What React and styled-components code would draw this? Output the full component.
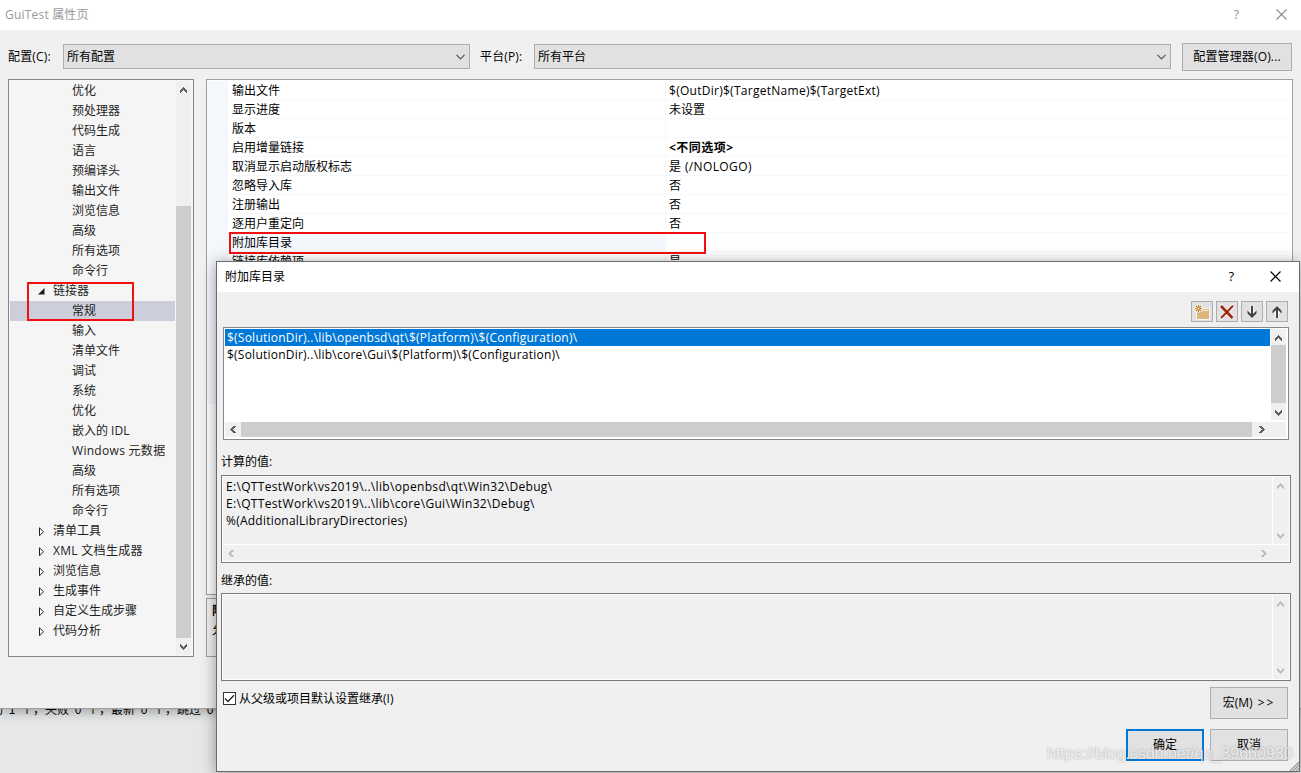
import React, { useState } from 'react';
import styled, { createGlobalStyle, css } from 'styled-components';

const treeItems = [
  { label: '优化' },
  { label: '预处理器' },
  { label: '代码生成' },
  { label: '语言' },
  { label: '预编译头' },
  { label: '输出文件' },
  { label: '浏览信息' },
  { label: '高级' },
  { label: '所有选项' },
  { label: '命令行' },
  { label: '链接器', parent: true, open: true },
  { label: '常规' },
  { label: '输入' },
  { label: '清单文件' },
  { label: '调试' },
  { label: '系统' },
  { label: '优化' },
  { label: '嵌入的 IDL' },
  { label: 'Windows 元数据', latin: true },
  { label: '高级' },
  { label: '所有选项' },
  { label: '命令行' },
  { label: '清单工具', parent: true },
  { label: 'XML 文档生成器', parent: true, latin: true },
  { label: '浏览信息', parent: true },
  { label: '生成事件', parent: true },
  { label: '自定义生成步骤', parent: true },
  { label: '代码分析', parent: true },
];

const properties = [
  { name: '输出文件', value: '$(OutDir)$(TargetName)$(TargetExt)', spacing: '0.27px' },
  { name: '显示进度', value: '未设置' },
  { name: '版本', value: '' },
  { name: '启用增量链接', value: '<不同选项>', bold: true, spacing: '0.5px' },
  { name: '取消显示启动版权标志', value: '是 (/NOLOGO)', spacing: '0.38px' },
  { name: '忽略导入库', value: '否' },
  { name: '注册输出', value: '否' },
  { name: '逐用户重定向', value: '否' },
  { name: '附加库目录', value: '', active: true },
  { name: '链接库依赖项', value: '是' },
];

const directories = [
  '$(SolutionDir)..\\lib\\openbsd\\qt\\$(Platform)\\$(Configuration)\\',
  '$(SolutionDir)..\\lib\\core\\Gui\\$(Platform)\\$(Configuration)\\',
];

const evaluated = [
  'E:\\QTTestWork\\vs2019\\..\\lib\\openbsd\\qt\\Win32\\Debug\\',
  'E:\\QTTestWork\\vs2019\\..\\lib\\core\\Gui\\Win32\\Debug\\',
  '%(AdditionalLibraryDirectories)',
];

function Arrow({ dir = 'up', color = '#606060' }) {
  const angle = { up: 0, right: 90, down: 180, left: 270 }[dir];
  return (
    <svg width="7" height="7" viewBox="0 0 7 7" shapeRendering="crispEdges">
      <path
        transform={`rotate(${angle} 3.5 3.5)`}
        fill={color}
        d="M3 0h1v1h1v1h1v1h1v3h-1v-1h-1v-1h-1v-1h-1v1h-1v1h-1v1h-1v-3h1v-1h1v-1h1z"
      />
    </svg>
  );
}

function CloseIcon({ color }) {
  return (
    <svg width="11" height="11" viewBox="0 0 11 11">
      <path d="M.5 .5l10 10M10.5 .5l-10 10" stroke={color} strokeWidth="1.1" fill="none" />
    </svg>
  );
}

function ComboArrow() {
  return (
    <svg width="9" height="6" viewBox="0 0 9 6">
      <path d="M.5 .8l4 4 4-4" stroke="#555" strokeWidth="1.2" fill="none" />
    </svg>
  );
}

function Expander({ open }) {
  return (
    <svg width="8" height="9" viewBox="0 0 8 9">
      {open ? (
        <path d="M6.500 1v6.500H0z" fill="#1e1e1e" />
      ) : (
        <path d="M1.5 .8v7.900l4-3.950z" fill="#fff" stroke="#1e1e1e" />
      )}
    </svg>
  );
}

function NewFolderIcon() {
  return (
    <svg width="16" height="16" viewBox="0 0 16 16">
      <path d="M2 7h6l1.500-3H16v12H2z" fill="#f6f6f6" />
      <path d="M3 7h5.500l1-2H15v10H3z" fill="#dcb67a" />
      <path d="M9.500 6.500h4.500" stroke="#f6f0e4" />
      <circle cx="4.500" cy="4.500" r="4" fill="#f6f6f6" />
      <path
        d="M4.500 1v2.200M4.500 5.800V8M1 4.500h2.200M5.800 4.500H8M2 2l1.700 1.700M5.300 5.300L7 7M7 2L5.300 3.700M3.700 5.300L2 7"
        stroke="#c27d1a"
        strokeWidth="1.200"
      />
      <circle cx="4.500" cy="4.500" r="1.400" fill="none" stroke="#c27d1a" strokeWidth=".8" />
    </svg>
  );
}

function DeleteIcon() {
  return (
    <svg width="16" height="16" viewBox="0 0 16 16">
      <path d="M1.500 1.500l12 12.500M14.500 1.500L1.500 14.500" stroke="#f6f6f6" strokeWidth="4" />
      <path d="M2 2l11.500 12" stroke="#a1260d" strokeWidth="2.600" />
      <path d="M14 1.800L2 14" stroke="#a1260d" strokeWidth="2" />
    </svg>
  );
}

function MoveIcon({ up }) {
  return (
    <svg width="16" height="16" viewBox="0 0 16 16">
      <g transform={up ? 'rotate(180 8 8)' : undefined}>
        <path d="M8 2v11M4 8l4 4 4-4" stroke="#f6f6f6" strokeWidth="4" fill="none" />
        <path d="M8 2v10" stroke="#424242" strokeWidth="2" />
        <path d="M3.500 6.500v3L8 14l4.500-4.500v-3L8 11z" fill="#424242" />
      </g>
    </svg>
  );
}

function ScrollBar({ horizontal, disabled, thumb, width, lead, atStart }) {
  const color = disabled ? '#bfbfbf' : '#606060';
  return (
    <Track $horizontal={horizontal} $width={width}>
      <TrackEnd $horizontal={horizontal} $size={lead} $first>
        <Arrow dir={horizontal ? 'left' : 'up'} color={color} />
      </TrackEnd>
      <TrackBody $horizontal={horizontal} $align={atStart ? 'flex-start' : 'flex-end'}>
        {thumb && <Thumb $horizontal={horizontal} $length={thumb} />}
      </TrackBody>
      <TrackEnd $horizontal={horizontal} $size={lead}>
        <Arrow dir={horizontal ? 'right' : 'down'} color={color} />
      </TrackEnd>
    </Track>
  );
}

function DirectoryDialog() {
  const [inherit, setInherit] = useState(true);
  const [selected, setSelected] = useState(0);

  return (
    <Dialog>
      <DialogTitle>
        <span>附加库目录</span>
        <TitleButtons $gap="36px" $right="18px">
          <Help>?</Help>
          <CloseIcon color="#000" />
        </TitleButtons>
      </DialogTitle>
      <ToolRow>
        <ToolButton><NewFolderIcon /></ToolButton>
        <ToolButton><DeleteIcon /></ToolButton>
        <ToolButton><MoveIcon /></ToolButton>
        <ToolButton><MoveIcon up /></ToolButton>
      </ToolRow>
      <ListBox>
        <ListTop>
          <List>
            {directories.map((dir, i) => (
              <ListRow key={dir} $selected={i === selected} onClick={() => setSelected(i)}>
                {dir}
              </ListRow>
            ))}
          </List>
          <ScrollBar width="15px" lead="16px" thumb="58px" atStart />
        </ListTop>
        <ListBottom>
          <ScrollBar horizontal width="15px" lead="16px" thumb="1011px" atStart />
        </ListBottom>
      </ListBox>

      <FieldLabel $top="13px" $bottom="5px">计算的值:</FieldLabel>
      <ReadBox>
        <ReadTop>
          <ReadText>
            {evaluated.map((line, i) => (
              <ReadLine key={line} $spacing={i === 2 ? '0.23px' : '0.33px'}>{line}</ReadLine>
            ))}
          </ReadText>
          <ScrollBar disabled width="16px" lead="17px" />
        </ReadTop>
        <ReadBottom>
          <ScrollBar horizontal disabled width="16px" lead="17px" />
        </ReadBottom>
      </ReadBox>

      <FieldLabel $top="9px" $bottom="4px">继承的值:</FieldLabel>
      <ReadBox>
        <ReadTop>
          <ReadText />
          <ScrollBar disabled width="16px" lead="17px" />
        </ReadTop>
      </ReadBox>

      <MacroRow>
        <CheckLabel onClick={() => setInherit(!inherit)}>
          <CheckBox>
            {inherit && (
              <svg width="11" height="11" viewBox="0 0 11 11">
                <path d="M1 5.500l3 3L10 2.200" stroke="#222" strokeWidth="1.300" fill="none" />
              </svg>
            )}
          </CheckBox>
          从父级或项目默认设置继承(I)
        </CheckLabel>
        <Button>
          宏(M) <More>&gt;&gt;</More>
        </Button>
      </MacroRow>
      <ButtonRow>
        <Button $primary>确定</Button>
        <Button>取消</Button>
      </ButtonRow>
      <Grip width="9" height="9" viewBox="0 0 9 9">
        <path d="M0 9L9 0M3 9L9 3M6 9L9 6" stroke="#9a9a9a" strokeWidth="1.300" />
      </Grip>
    </Dialog>
  );
}

export default function App() {
  const [active, setActive] = useState(11);

  return (
    <Screen>
      <GlobalStyle />
      <MainWindow>
        <MainTitle>
          <TitleText>GuiTest 属性页</TitleText>
          <TitleButtons $gap="37px" $right="14px">
            <Help>?</Help>
            <CloseIcon color="#8c8c8c" />
          </TitleButtons>
        </MainTitle>
        <ConfigRow>
          <ConfigLabel $width="55px">配置(C):</ConfigLabel>
          <Combo $width="407px">
            所有配置
            <ComboArrow />
          </Combo>
          <ConfigLabel $width="54px" $left="10px">平台(P):</ConfigLabel>
          <Combo $width="637px">
            所有平台
            <ComboArrow />
          </Combo>
          <ManagerButton>配置管理器(O)...</ManagerButton>
        </ConfigRow>
        <Content>
          <Tree>
            <TreeList>
              {treeItems.map((item, i) => (
                <TreeRow
                  key={i}
                  $parent={item.parent}
                  $latin={item.latin}
                  $selected={i === active}
                  onClick={() => setActive(i)}
                >
                  {item.parent && <Expander open={item.open} />}
                  {item.label}
                </TreeRow>
              ))}
            </TreeList>
            <ScrollBar width="15px" lead="17px" thumb="432px" />
            <TreeMark />
          </Tree>
          <Right>
            <Grid>
              <Gutter />
              <GridRows>
                {properties.map((p) => (
                  <GridRow key={p.name}>
                    <NameCell $active={p.active}>{p.name}</NameCell>
                    <ValueCell $bold={p.bold} $spacing={p.spacing}>{p.value}</ValueCell>
                  </GridRow>
                ))}
              </GridRows>
              <GridMark />
            </Grid>
            <Description>
              <strong>附加库目录</strong>
              <span>允许用户重写环境库路径。</span>
            </Description>
          </Right>
        </Content>
      </MainWindow>
      <OutputStrip>
        功<Num>1</Num>个，失败<Num>0</Num>个，最新<Num>0</Num>个，跳过<Num>0</Num>个
      </OutputStrip>
      <DirectoryDialog />
      <Watermark>https://blog.csdn.net/qq_39660930</Watermark>
    </Screen>
  );
}

const GlobalStyle = createGlobalStyle`
  * {
    box-sizing: border-box;
  }
  body {
    margin: 0;
    overflow: hidden;
  }
  svg {
    display: block;
    flex: none;
  }
`;

const Screen = styled.div`
  position: relative;
  width: 1301px;
  height: 773px;
  overflow: hidden;
  background: #e6e7e8;
  color: #000;
  font-family: 'Open Sans', 'Noto Sans CJK SC', sans-serif;
  font-size: 12px;
  line-height: 17px;
  white-space: nowrap;
`;

const MainWindow = styled.div`
  position: relative;
  z-index: 1;
  display: flex;
  flex-direction: column;
  height: 709px;
  background: #f0f0f0;
  border-bottom: 1px solid #a0a0a0;
  box-shadow: 0 2px 12px rgba(0, 0, 0, 0.35);
`;

const MainTitle = styled.div`
  display: flex;
  align-items: center;
  justify-content: space-between;
  height: 30px;
  padding: 0 0 2px 5px;
  background: #fff;
  color: #999;
`;

const TitleText = styled.span`
  letter-spacing: 0.2px;
`;

const TitleButtons = styled.div`
  display: flex;
  align-items: center;
  gap: ${({ $gap }) => $gap};
  padding-right: ${({ $right }) => $right};
`;

const Help = styled.span`
  font-size: 13px;
`;

const ConfigRow = styled.div`
  display: flex;
  align-items: center;
  height: 49px;
  padding: 4px 9px 0 8px;
`;

const ConfigLabel = styled.label`
  width: ${({ $width }) => $width};
  margin-left: ${({ $left }) => $left || 0};
  letter-spacing: 0.15px;
`;

const Combo = styled.div`
  display: flex;
  align-items: center;
  justify-content: space-between;
  width: ${({ $width }) => $width};
  height: 25px;
  padding: 0 4px 0 3px;
  background: #e1e1e1;
  border: 1px solid #adadad;
`;

const ManagerButton = styled.button`
  width: 110px;
  height: 28px;
  margin-left: auto;
  padding: 0;
  background: #e1e1e1;
  border: 1px solid #adadad;
  color: #000;
  font: inherit;
  letter-spacing: 0.15px;
`;

const Content = styled.div`
  display: flex;
  gap: 12px;
  padding: 0 8px;
  height: 578px;
`;

const Tree = styled.div`
  position: relative;
  display: flex;
  width: 186px;
  padding: 1px 2px 1px 1px;
  background: #f5f5f5;
  border: 1px solid #828790;
`;

const TreeList = styled.div`
  width: 165px;
  margin-right: 1px;
`;

const TreeRow = styled.div`
  display: flex;
  align-items: center;
  height: 20px;
  padding-bottom: 2px;
  padding-left: ${({ $parent }) => ($parent ? '28px' : '62px')};
  gap: 7px;
  color: #1e1e1e;
  letter-spacing: ${({ $latin }) => ($latin ? '0.3px' : 'normal')};
  background: ${({ $selected }) => ($selected ? '#cccedb' : 'transparent')};

  svg {
    margin-top: 2px;
  }
`;

const mark = css`
  position: absolute;
  border: 2px solid #f01010;
  pointer-events: none;
`;

const TreeMark = styled.div`
  ${mark}
  left: 18px;
  top: 202px;
  width: 107px;
  height: 39px;
`;

const GridMark = styled.div`
  ${mark}
  left: 22px;
  top: 152px;
  width: 477px;
  height: 22px;
`;

const Right = styled.div`
  display: flex;
  flex-direction: column;
  gap: 3px;
  width: 1087px;
`;

const Grid = styled.div`
  position: relative;
  display: flex;
  height: 516px;
  padding-top: 1px;
  background: #fff;
  border: 1px solid #a0a0a0;
`;

const Gutter = styled.div`
  width: 21px;
  height: 323px;
  background: #f4f7fc;
`;

const GridRows = styled.div`
  flex: 1;
`;

const GridRow = styled.div`
  display: flex;
  height: 19px;
  border-bottom: 1px solid #f4f7fc;
`;

const NameCell = styled.div`
  width: 438px;
  padding-left: 4px;
  border-right: 1px solid #f4f7fc;
  line-height: 20px;
  background: ${({ $active }) => ($active ? '#f4f7fc' : 'transparent')};
`;

const ValueCell = styled.div`
  padding-left: 3px;
  line-height: 20px;
  font-weight: ${({ $bold }) => ($bold ? 700 : 400)};
  letter-spacing: ${({ $spacing }) => $spacing || 'normal'};
`;

const Description = styled.div`
  display: flex;
  flex-direction: column;
  flex: 1;
  padding: 2px 5px;
  line-height: 19px;
  border: 1px solid #a0a0a0;
`;

// output pane text that shows below the window edge
const OutputStrip = styled.div`
  height: 64px;
  margin: -9px 0 0 -9px;
  font-family: 'Noto Sans CJK SC', sans-serif;
  color: #000;
`;

const Num = styled.span`
  display: inline-block;
  width: 18px;
  text-align: center;
`;

const Dialog = styled.div`
  position: absolute;
  z-index: 2;
  left: 216px;
  top: 261px;
  display: flex;
  flex-direction: column;
  width: 1084px;
  height: 511px;
  background: #f0f0f0;
  border: 1px solid #6b6b6b;
  box-shadow: 0 2px 14px rgba(0, 0, 0, 0.4);
`;

const DialogTitle = styled.div`
  display: flex;
  align-items: center;
  justify-content: space-between;
  height: 30px;
  padding: 0 0 2px 8px;
  background: #fff;
`;

const ToolRow = styled.div`
  display: flex;
  justify-content: flex-end;
  gap: 3px;
  padding: 9px 11px 5px 0;
`;

const ToolButton = styled.button`
  display: flex;
  align-items: center;
  justify-content: center;
  width: 22px;
  height: 21px;
  padding: 0;
  background: #e1e1e1;
  border: 1px solid #adadad;
`;

const ListBox = styled.div`
  display: flex;
  flex-direction: column;
  width: 1066px;
  height: 113px;
  margin-left: 6px;
  padding: 1px;
  background: #fff;
  border: 1px solid #828790;
`;

const ListTop = styled.div`
  display: flex;
  height: 93px;
  padding: 0 1px 2px 0;
`;

const List = styled.div`
  width: 1045px;
  margin-right: 1px;
`;

const ListRow = styled.div`
  height: 17px;
  padding-left: 2px;
  line-height: 17px;
  letter-spacing: 0.23px;
  color: ${({ $selected }) => ($selected ? '#fff' : '#000')};
  background: ${({ $selected }) => ($selected ? '#0078d7' : '#fff')};
`;

const ListBottom = styled.div`
  display: flex;
  width: 1061px;
  padding-right: 17px;
  background: #f0f0f0;
`;

const FieldLabel = styled.div`
  height: 17px;
  margin: ${({ $top, $bottom }) => `${$top} 0 ${$bottom} 4px`};
`;

const ReadBox = styled.div`
  display: flex;
  flex-direction: column;
  width: 1070px;
  height: 88px;
  margin-left: 4px;
  border: 1px solid #7a7a7a;
  box-shadow: inset 0 0 0 1px #fff;
  padding: 1px;
`;

const ReadTop = styled.div`
  display: flex;
  flex: 1;
`;

const ReadText = styled.div`
  flex: 1;
  padding: 1px 0 0 3px;
  border-right: 1px solid #fff;
`;

const ReadLine = styled.div`
  letter-spacing: ${({ $spacing }) => $spacing};
`;

const ReadBottom = styled.div`
  display: flex;
  height: 17px;
  padding-right: 17px;
  border-top: 1px solid #fff;
`;

const MacroRow = styled.div`
  display: flex;
  justify-content: space-between;
  padding: 6px 11px 0 6px;
`;

const CheckLabel = styled.label`
  display: flex;
  align-items: center;
  gap: 3px;
  height: 23px;
`;

const CheckBox = styled.span`
  width: 13px;
  height: 13px;
  background: #fff;
  border: 1px solid #333;
`;

const ButtonRow = styled.div`
  display: flex;
  justify-content: flex-end;
  gap: 6px;
  padding: 10px 11px 0 0;
`;

const Button = styled.button`
  width: 78px;
  height: 32px;
  padding: 0 0 2px;
  background: #e1e1e1;
  border: ${({ $primary }) => ($primary ? '2px solid #0078d7' : '1px solid #adadad')};
  color: #000;
  font: inherit;
`;

const More = styled.span`
  margin-left: 2px;
  letter-spacing: 2px;
`;

const Grip = styled.svg`
  position: absolute;
  right: 0;
  bottom: 0;
`;

const Track = styled.div`
  display: flex;
  flex: ${({ $horizontal }) => ($horizontal ? '1' : 'none')};
  flex-direction: ${({ $horizontal }) => ($horizontal ? 'row' : 'column')};
  ${({ $horizontal, $width }) => ($horizontal ? `height: ${$width};` : `width: ${$width};`)}
  background: #f0f0f0;
`;

const TrackEnd = styled.div`
  display: flex;
  flex: none;
  align-items: center;
  justify-content: center;
  ${({ $horizontal, $size }) => ($horizontal ? `width: ${$size};` : `height: ${$size};`)}
  ${({ $horizontal, $first }) => !$horizontal && $first && 'padding-top: 2px;'}
  ${({ $horizontal }) => !$horizontal && 'padding-right: 1px;'}
`;

const TrackBody = styled.div`
  display: flex;
  flex: 1;
  flex-direction: ${({ $horizontal }) => ($horizontal ? 'row' : 'column')};
  justify-content: ${({ $align }) => $align};
`;

const Thumb = styled.div`
  flex: none;
  ${({ $horizontal, $length }) => ($horizontal ? `width: ${$length};` : `height: ${$length};`)}
  background: #cdcdcd;
`;

const Watermark = styled.div`
  position: absolute;
  z-index: 3;
  left: 1047px;
  top: 745px;
  color: rgba(255, 255, 255, 0.75);
  font-family: 'Liberation Sans', sans-serif;
  font-size: 16px;
  text-shadow: 0 0 2px rgba(0, 0, 0, 0.35);
`;
